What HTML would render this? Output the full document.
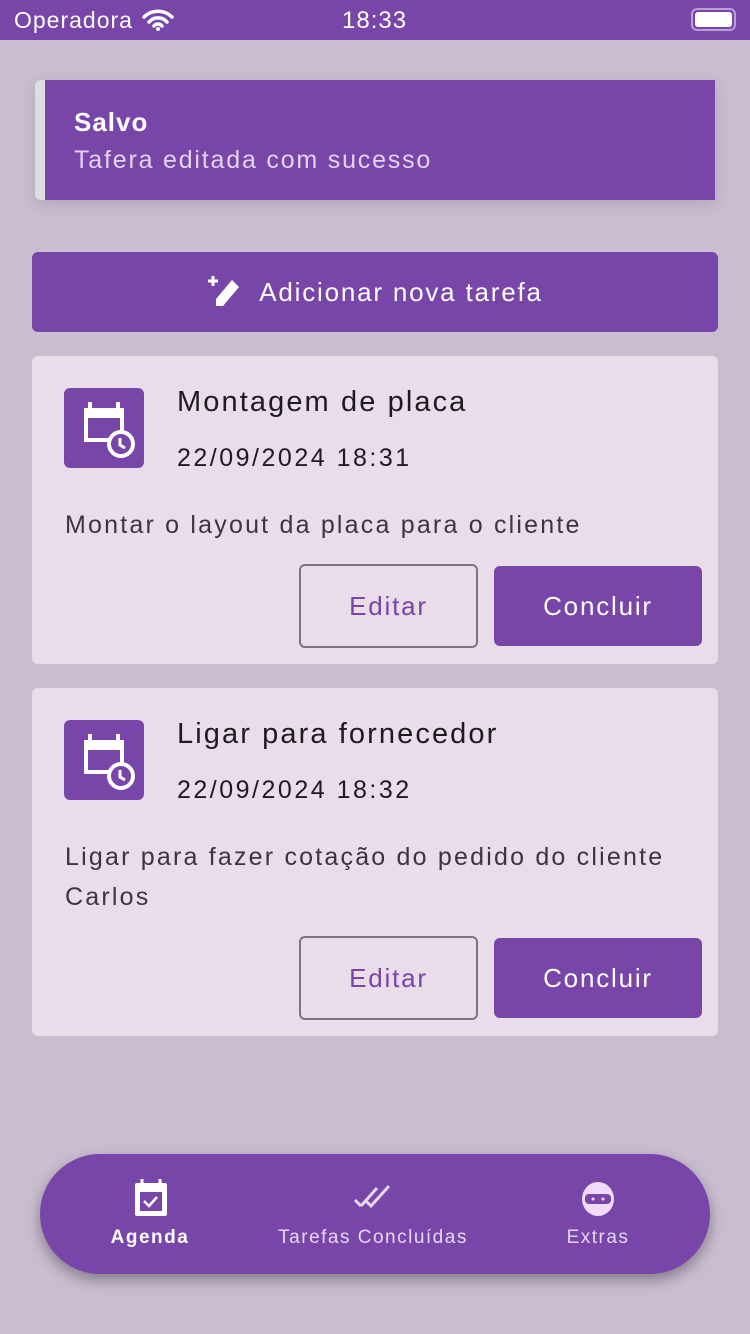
<!DOCTYPE html>
<html><head><meta charset="utf-8"><style>
*{margin:0;padding:0;box-sizing:border-box}
body{width:750px;height:1334px;background:#c9bdd0;font-family:"Liberation Sans",sans-serif;position:relative;overflow:hidden;letter-spacing:1.8px}
.abs{position:absolute}
.status{left:0;top:0;width:750px;height:40px;background:#7845a9;color:#fff;font-size:23px;letter-spacing:1px}
.toast{left:35px;top:80px;width:680px;height:120px;background:#7845a9;border-left:10px solid #ddd;border-radius:6px 0 0 6px;box-shadow:0 4px 16px rgba(0,0,0,.12)}
.add{left:32px;top:252px;width:686px;height:80px;background:#7845a9;border-radius:6px;color:#fff;font-size:26px;display:flex;align-items:center;justify-content:center}
.card{left:32px;width:686px;background:#e8dde8;border-radius:6px}
.ico{left:32px;top:32px;width:80px;height:80px;background:#7845a9;border-radius:6px}
.title{left:145px;font-size:29px;color:#1e1a22;letter-spacing:2.1px}
.date{left:145px;font-size:25px;color:#1e1a22;letter-spacing:2.5px}
.desc{left:33px;font-size:25px;color:#3a3540;line-height:40px;width:640px;letter-spacing:2.2px}
.ed{width:179px;height:84px;border:2px solid #7a7480;border-radius:6px;color:#7845a9;font-size:26px;display:flex;align-items:center;justify-content:center}
.co{width:208px;height:80px;background:#7845a9;border-radius:6px;color:#fff;font-size:26px;display:flex;align-items:center;justify-content:center}
.nav{left:40px;top:1154px;width:670px;height:120px;background:#7845a9;border-radius:60px;box-shadow:0 6px 14px rgba(0,0,0,.35)}
.nl{font-size:19px;color:#e6d8f0;letter-spacing:1.5px;text-align:center;width:240px}
</style></head><body>
<div class="abs status">
<span class="abs" style="left:14px;top:7px">Operadora</span>
<svg class="abs" style="left:142px;top:9px" width="32" height="22" viewBox="0 0 32 22"><path d="M2 8a20 20 0 0 1 28 0M7 13a12 12 0 0 1 18 0M12 17a5 5 0 0 1 8 0" stroke="#fff" stroke-width="3.5" fill="none" stroke-linecap="round"/><circle cx="16" cy="20" r="2" fill="#fff"/></svg>
<span class="abs" style="left:342px;top:7px;font-size:24px">18:33</span>
<div class="abs" style="left:691px;top:8px;width:45px;height:23px;border:2px solid #b89ed4;border-radius:6px"><div style="margin:2px;height:15px;background:#fff;border-radius:3px"></div></div>
</div>
<div class="abs toast">
<div class="abs" style="left:29px;top:27px;color:#fff;font-size:26px;font-weight:bold;letter-spacing:1px">Salvo</div>
<div class="abs" style="left:29px;top:66px;color:#e2d3ee;font-size:25px">Tafera editada com sucesso</div>
</div>
<div class="abs add"><svg width="34" height="34" viewBox="0 0 34 34" style="margin-right:18px"><path d="M6 1v10M1 6h10" stroke="#fff" stroke-width="3"/><path d="M25 5l7 7-16 19H9v-7z" fill="#fff"/></svg>Adicionar nova tarefa</div>

<div class="abs card" style="top:356px;height:308px">
<div class="abs ico"><svg width="80" height="80" viewBox="0 0 80 80"><path d="M22 20h36v10H22z" fill="#fff"/><rect x="22" y="22" width="36" height="30" fill="none" stroke="#fff" stroke-width="4"/><path d="M26 14v8M54 14v8" stroke="#fff" stroke-width="4"/><circle cx="57" cy="56" r="12" fill="#7845a9" stroke="#fff" stroke-width="4"/><path d="M56 50v7l5 3" stroke="#fff" stroke-width="3" fill="none"/></svg></div>
<div class="abs title" style="top:30px">Montagem de placa</div>
<div class="abs date" style="top:88px">22/09/2024 18:31</div>
<div class="abs desc" style="top:149px">Montar o layout da placa para o cliente</div>
<div class="abs ed" style="left:267px;top:208px">Editar</div>
<div class="abs co" style="left:462px;top:210px">Concluir</div>
</div>

<div class="abs card" style="top:688px;height:348px">
<div class="abs ico"><svg width="80" height="80" viewBox="0 0 80 80"><path d="M22 20h36v10H22z" fill="#fff"/><rect x="22" y="22" width="36" height="30" fill="none" stroke="#fff" stroke-width="4"/><path d="M26 14v8M54 14v8" stroke="#fff" stroke-width="4"/><circle cx="57" cy="56" r="12" fill="#7845a9" stroke="#fff" stroke-width="4"/><path d="M56 50v7l5 3" stroke="#fff" stroke-width="3" fill="none"/></svg></div>
<div class="abs title" style="top:30px">Ligar para fornecedor</div>
<div class="abs date" style="top:88px">22/09/2024 18:32</div>
<div class="abs desc" style="top:149px">Ligar para fazer cotação do pedido do cliente Carlos</div>
<div class="abs ed" style="left:267px;top:248px">Editar</div>
<div class="abs co" style="left:462px;top:250px">Concluir</div>
</div>

<div class="abs nav">
<svg class="abs" style="left:92px;top:24px" width="38" height="40" viewBox="0 0 38 40"><rect x="3" y="5" width="32" height="33" rx="2" fill="#fff"/><path d="M10 1v6M28 1v6" stroke="#fff" stroke-width="3"/><rect x="8" y="14" width="22" height="19" fill="#7845a9"/><path d="M12 23l5 5 8-9" stroke="#fff" stroke-width="2.5" fill="none"/></svg>
<div class="abs nl" style="left:-10px;top:73px;color:#fff;font-weight:bold">Agenda</div>
<svg class="abs" style="left:313px;top:30px" width="42" height="28" viewBox="0 0 42 28"><path d="M2 16l6 6M8 22L24 4M12 16l6 6L36 2" stroke="#e6d8f0" stroke-width="3" fill="none"/></svg>
<div class="abs nl" style="left:213px;top:73px">Tarefas Concluídas</div>
<svg class="abs" style="left:541px;top:27px" width="34" height="36" viewBox="0 0 34 36"><ellipse cx="17" cy="18" rx="16" ry="17" fill="#f0dcf8"/><rect x="4" y="13" width="26" height="10" rx="4" fill="#7845a9"/><circle cx="12" cy="18" r="1.5" fill="#f0dcf8"/><circle cx="22" cy="18" r="1.5" fill="#f0dcf8"/></svg>
<div class="abs nl" style="left:438px;top:73px">Extras</div>
</div>
</body></html>
